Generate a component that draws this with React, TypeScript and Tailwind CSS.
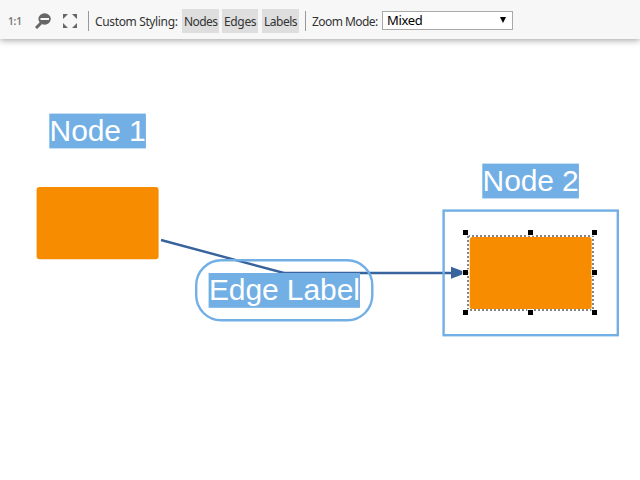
import React from "react";

const toolbarText = "whitespace-nowrap font-['Noto_Sans',sans-serif] text-[12px] leading-[24px] text-[#333]";

function Label({ children, width, spacing }: { children: string; width: string; spacing: string }) {
  return <span className={`${toolbarText} ${width} ${spacing} shrink-0 pt-[2px]`}>{children}</span>;
}

function Toggle({ children, width, spacing }: { children: string; width: string; spacing: string }) {
  return (
    <button className={`${toolbarText} ${width} ${spacing} flex h-6 shrink-0 items-start bg-[#dedede] pt-px pl-[2px] text-left`}>
      {children}
    </button>
  );
}

function Separator() {
  return <div className="h-5 w-px shrink-0 bg-[#999]" />;
}

function ZoomOutIcon() {
  return (
    <svg className="ml-[13px] shrink-0" width="16" height="16" viewBox="0 0 16 16">
      <path d="M1 15 L6 10" stroke="#666" strokeWidth="3" />
      <ellipse cx="9.6" cy="6" rx="6.2" ry="5.8" fill="#666" />
      <rect x="5.5" y="5" width="8.5" height="2" fill="#f7f7f7" />
    </svg>
  );
}

function FitIcon() {
  return (
    <svg className="ml-[12px] shrink-0" width="14" height="14" viewBox="0 0 14 14" fill="#666">
      <path d="M0 0h5L0 5zM9 0h5v5zM0 9l5 5H0zM14 9v5H9z" />
    </svg>
  );
}

const handles = [
  [463, 230], [528, 230], [592, 230],
  [463, 270], [592, 270],
  [463, 310], [528, 310], [592, 310],
];

function NodeLabel({ x, y, width, text }: { x: number; y: number; width: number; text: string }) {
  return (
    <g>
      <rect x={x} y={y} width={width} height={34.8} fill="#71afe5" />
      <text x={x + 0.3} y={y + 27.3} fontSize="30" fill="white" textLength={width - 0.4} lengthAdjust="spacing">
        {text}
      </text>
    </g>
  );
}

export default function App() {
  return (
    <div className="flex h-[480px] w-[640px] flex-col overflow-hidden bg-white">
      <header className="relative z-10 flex h-[39px] shrink-0 items-center bg-[#f7f7f7] pt-[3px] pl-[8px] shadow-[0_1px_7px_rgba(0,0,0,0.4)]">
        <span className="w-[14px] shrink-0 whitespace-nowrap font-['Noto_Sans',sans-serif] text-[10px] font-semibold leading-none tracking-[-0.1px] text-[#777]">1:1</span>
        <ZoomOutIcon />
        <FitIcon />
        <div className="ml-[11px]"><Separator /></div>
        <div className="ml-[6px] flex"><Label width="w-[87px]" spacing="tracking-[-0.36px]">Custom Styling:</Label></div>
        <div className="flex">
          <Toggle width="w-[37px]" spacing="tracking-[-0.6px]">Nodes</Toggle>
          <div className="ml-[3px] flex"><Toggle width="w-[36px]" spacing="tracking-[-0.35px]">Edges</Toggle></div>
          <div className="ml-[4px] flex"><Toggle width="w-[37px]" spacing="tracking-[-0.5px]">Labels</Toggle></div>
        </div>
        <div className="ml-[6px]"><Separator /></div>
        <div className="ml-[6px] flex"><Label width="w-[70px]" spacing="tracking-[-0.55px]">Zoom Mode:</Label></div>
        <button className="mb-[2px] flex h-[19px] w-[131px] items-center justify-between border border-[#a9a9a9] bg-white pr-[6px] pl-[4px] text-black">
          <span className="font-['Noto_Sans',sans-serif] text-[13px] leading-none tracking-[-0.35px]">Mixed</span>
          <svg width="6" height="6" viewBox="0 0 6 6"><path d="M0 0h6L3 6z" /></svg>
        </button>
      </header>
      <svg className="block shrink-0 font-['Liberation_Sans',Arial,sans-serif]" width="640" height="441" viewBox="0 39 640 441">
        <rect x="36.6" y="187" width="122" height="72.3" rx="3" fill="#f78c00" />
        <rect x="469.7" y="237" width="122" height="72.3" rx="3" fill="#f78c00" />
        <path d="M161 240 L284 273 H453" fill="none" stroke="#38639c" strokeWidth="2.4" />
        <path d="M451 266.8 L467 272.8 L451 278.8 Z" fill="#38639c" />
        <NodeLabel x={49.3} y={113.6} width={96.6} text="Node 1" />
        <NodeLabel x={482.3} y={163.6} width={96.6} text="Node 2" />
        <NodeLabel x={208.6} y={273} width={151.4} text="Edge Label" />
        <rect x="196.2" y="260.3" width="176.1" height="60" rx="25" fill="none" stroke="#71afe5" strokeWidth="2.4" />
        <rect x="443.6" y="210.6" width="174.2" height="124.6" fill="none" stroke="#71afe5" strokeWidth="2.4" />
        <rect x="468" y="236" width="125" height="74" fill="none" stroke="white" strokeWidth="2" />
        <rect x="468" y="236" width="125" height="74" fill="none" stroke="#858585" strokeWidth="2" strokeDasharray="2 2" />
        {handles.map(([x, y]) => (
          <g key={`${x}-${y}`}>
            <rect x={x - 1} y={y - 1} width="7" height="7" fill="white" fillOpacity="0.7" />
            <rect x={x} y={y} width="5" height="5" fill="black" />
          </g>
        ))}
      </svg>
    </div>
  );
}
